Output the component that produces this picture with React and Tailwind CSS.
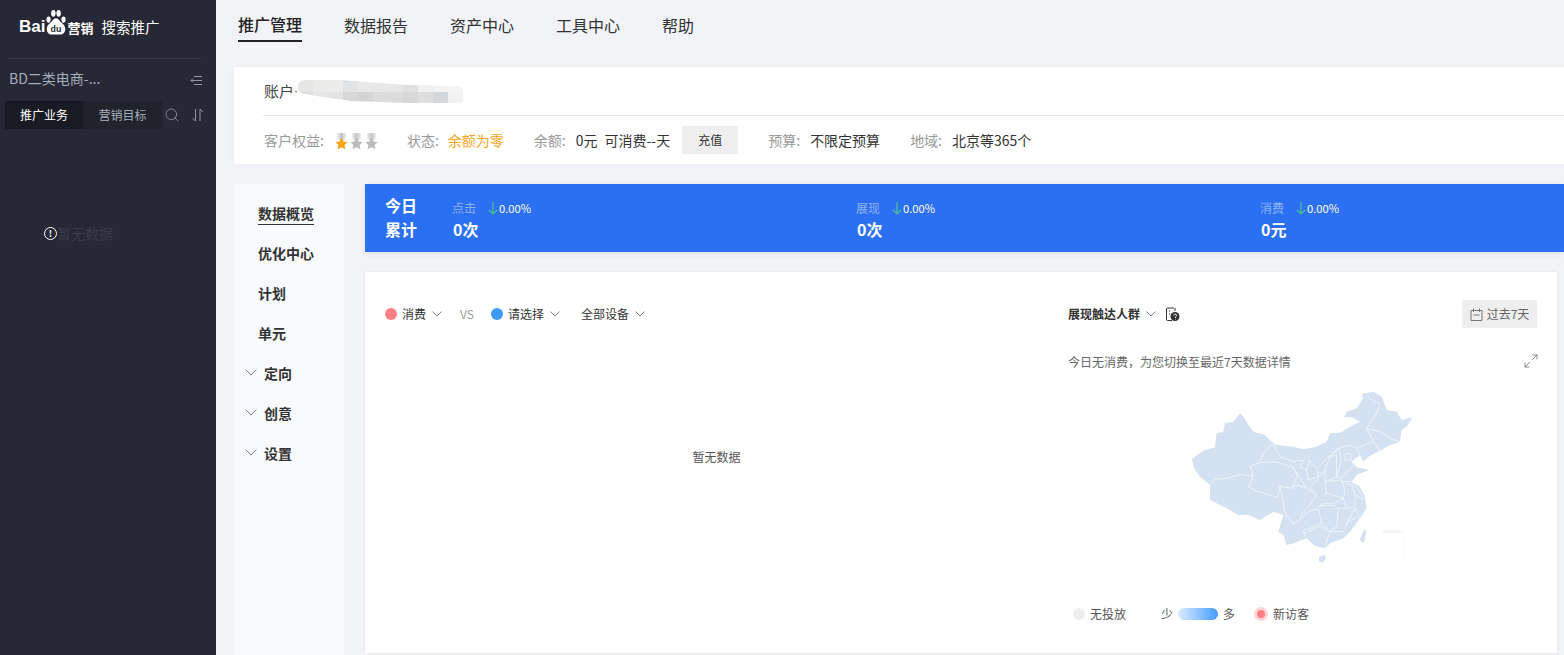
import React from 'react';
import { Search, Maximize2 } from 'lucide-react';

const FONT = 'font-["Noto_Sans_CJK_SC","Liberation_Sans",sans-serif]';

const Chevron = ({ w = 10, color = '#7b8794', className = '', stroke = 1 }) => (
  <svg width={w} height={w * 0.6} viewBox="0 0 10 6" className={`shrink-0 ${className}`}>
    <path d="M0.5 0.5L5 5L9.500 0.5" fill="none" stroke={color} strokeWidth={stroke} />
  </svg>
);

const BaiduPaw = () => (
  <svg width="22" height="26" viewBox="0 0 25 27" preserveAspectRatio="none" className="shrink-0 -mt-[10px]">
    <ellipse cx="4" cy="11" rx="2.400" ry="3.200" fill="#fff" />
    <ellipse cx="9.500" cy="4.500" rx="2.500" ry="3.500" fill="#fff" />
    <ellipse cx="15.500" cy="4.500" rx="2.500" ry="3.500" fill="#fff" />
    <ellipse cx="21" cy="11" rx="2.400" ry="3.200" fill="#fff" />
    <path d="M12.500 9.500c3 0 4 3 6 4.500 3 2 4.500 4 4.500 7 0 3-2.500 5.500-5.500 5.500H7.500C4.500 26.500 2 24 2 21c0-3 1.500-5 4.500-7 2-1.500 3-4.500 6-4.500z" fill="#fff" />
    <text x="12.500" y="24" textAnchor="middle" fontSize="10" fontWeight="700" fill="#262835" fontFamily="Liberation Sans">du</text>
  </svg>
);

const Medal = ({ color }) => (
  <svg width="15" height="18" viewBox="0 0 15 18" className="shrink-0 mt-[4px]">
    <path d="M3.500 0h8v6l-2 2h-4l-2-2z" fill="#dedede" />
    <path d="M6 0h3v8H6z" fill="#c8c8c8" />
    <path d="M7.500 4.500l1.900 3.900 4.300.6-3.100 3 .8 4.300-3.900-2.100-3.900 2.100.8-4.300-3.100-3 4.300-.6z" fill={color} />
  </svg>
);

const Mosaic = () => {
  const top = ['#e6e6e4', '#ebebea', '#ececeb', '#e2e3e4', '#e9e9e8', '#e8e8e8', '#e6e6e6', '#e0e0e0', '#f0f0f0', '#f3f3f3', '#f5f5f5'];
  const bottom = ['#dcdcda', '#e6e6e6', '#e3e3e3', '#d8d8d8', '#d4d5d5', '#dcdcdc', '#dcdcdc', '#d8d8d8', '#dedede', '#d5d8da', '#f1f1f1'];
  return (
    <svg width="168" height="26" viewBox="0 0 168 26" className="shrink-0 mt-[3px]">
      <defs>
        <clipPath id="smudge">
          <path d="M8 0h35l25 2 40 3 50 1c7 0 10 4 10 8 0 6-3 9-10 9l-50 0-55-2-35-5L8 14C3 14 0 11 0 7S3 0 8 0z" />
        </clipPath>
      </defs>
      <g clipPath="url(#smudge)">
        {top.map((c, i) => <rect key={i} x={i * 15} y="0" width="15" height="12" fill={c} />)}
        {bottom.map((c, i) => <rect key={i} x={i * 15} y="12" width="15" height="14" fill={c} />)}
      </g>
    </svg>
  );
};

const ChinaMap = () => (
  <svg width="270" height="190" viewBox="0 0 810 570" className="shrink-0 ml-[92px] mt-[8px]">
    <path
      fill="#d3e1f1"
      d="M95 238L130 212L165 202L170 160L190 155L195 130L220 125L240 100L250 110L262 130L280 155L315 165L335 185L350 195L400 200L430 208L470 200L500 185L510 160L540 158L590 130L600 125L575 112L553 112L560 95L590 85L610 55L605 42L640 35L665 50L680 90L710 95L725 120L757 112L745 135L725 150L720 185L690 195L660 212L625 230L610 245L600 225L575 245L590 262L627 270L590 285L575 305L600 320L615 350L620 385L600 415L570 455L550 475L510 490L495 505L465 498L440 475L400 490L380 495L370 465L355 455L370 405L340 395L300 420L265 405L235 405L200 385L150 360L150 315L120 290L105 270Z"
    />
    <path fill="#d3e1f1" d="M478 530L495 524L498 536L486 548L476 544Z" />
    <path fill="#d3e1f1" d="M612 450L619 452L614 482L606 490L600 478Z" />
    <g fill="none" stroke="#f4f7fb" strokeWidth="2.500" strokeLinejoin="round">
      <path d="M150 315L165 298L200 295L240 283L280 288L272 258L300 248L312 215L340 192L360 230L400 245L430 240L420 262L440 270L448 240L470 265L500 235L535 205L570 195L590 205L640 185L620 145L630 130L650 100L660 70L640 65L620 45" />
      <path d="M280 288L265 320L285 332L330 345L352 352L360 318L395 325L412 290L400 262L345 245L300 248" />
      <path d="M400 262L420 295L440 325L470 345L450 375L440 385L425 400L420 420L400 432L375 400L365 340L360 318" />
      <path d="M395 325L410 315L440 325M440 270L445 300L475 290L470 265" />
      <path d="M470 345L450 320L470 300L495 270L510 230L535 205M495 270L495 305L500 340L490 345" />
      <path d="M510 230L530 225L530 290L500 305M535 205L545 240L530 290L545 295L575 260L600 225L590 205" />
      <path d="M555 222L570 220L575 240L555 240Z" />
      <path d="M545 295L545 305L575 305M495 305L545 300L555 330L550 355L500 340" />
      <path d="M475 380L490 370L520 370L550 355L560 385L535 385L520 375L480 378" />
      <path d="M555 310L575 315L585 345L585 380L560 385M575 305L610 350M585 345L615 360M585 385L600 415" />
      <path d="M425 415L445 395L475 385L485 430L450 445L430 450L435 470" />
      <path d="M535 385L530 440M585 385L560 430L555 450M560 430L590 410" />
      <path d="M430 460L480 440L510 455L495 500M510 455L555 455M485 430L510 455M530 440L510 455" />
      <path d="M640 185L660 212M620 145L660 155L690 175L720 185" />
    </g>
    <rect x="666" y="452" width="64" height="95" fill="#ffffff" stroke="#f7f7f7" />
    <rect x="670" y="452" width="54" height="6" fill="#f0f0f0" />
  </svg>
);

const Stat = ({ label, unit }) => (
  <div className="w-[404px] shrink-0">
    <div className="flex items-center h-[20px]">
      <span className="text-[12px] text-[#8fb3f5] w-[36px]">{label}</span>
      <svg width="10" height="14" viewBox="0 0 10 14" className="mr-[1px]">
        <path d="M5 1v12M1 9l4 4 4-4" fill="none" stroke="#4fc08d" strokeWidth="1.200" />
      </svg>
      <span className="text-[11.2px] text-white">0.00%</span>
    </div>
    <div className="text-[16px] font-bold text-white leading-[22px] pl-[1px]">{unit}</div>
  </div>
);

const NavItem = ({ children, active }) => (
  <div className="h-[40px] flex items-center pl-[24px] text-[14px] font-bold text-[#333]">
    <span className={active ? 'border-b border-[#333] leading-[22px]' : ''}>{children}</span>
  </div>
);

const NavGroup = ({ children }) => (
  <div className="h-[40px] flex items-center pl-[11px] gap-[7px] text-[14px] font-bold text-[#333]">
    <Chevron w={12} color="#777" stroke={0.8} />
    {children}
  </div>
);

const Pick = ({ dot, children }) => (
  <div className="flex items-center text-[12px] text-[#333]">
    {dot && <span className={`w-[12px] h-[12px] rounded-full mr-[5px] ${dot}`} />}
    {children}
    <Chevron className="ml-[6px]" />
  </div>
);

const Label = ({ children, className }) => (
  <span className={`text-[#999] ${className}`}>{children}</span>
);

export default function App() {
  return (
    <div className={`flex w-[1564px] h-[655px] overflow-hidden bg-[#f1f3f7] ${FONT}`}>
      {/* Sidebar */}
      <aside className="w-[216px] shrink-0 bg-[#262835] flex flex-col">
        <div className="mx-[9px] w-[192px] h-[59px] pb-[5px] border-b border-[#383a47] flex items-center pl-[10px]">
          <span className="text-white font-bold text-[17px] font-['Liberation_Sans']">Bai</span>
          <BaiduPaw />
          <span className="text-white font-bold text-[13px] mt-[2px]">营销</span>
          <span className="text-white text-[14.5px] ml-[8px]">搜索推广</span>
        </div>
        <div className="mx-[9px] w-[194px] flex items-center justify-between h-[38px]">
          <span className="text-[14px] text-[#a6adbb]">BD二类电商-...</span>
          <svg width="13" height="11" viewBox="0 0 13 11" className="mt-[5px]" stroke="#9096a3" fill="none">
            <path d="M4 1.500h8M1 5.500h11M4 9.500h8M3 3.500l-2 2 2 2" />
          </svg>
        </div>
        <div className="flex items-center ml-[5px] mt-[4px]">
          <div className="w-[78px] h-[28px] bg-[#191b24] flex items-center justify-center text-[12px] text-white">推广业务</div>
          <div className="w-[79px] h-[28px] bg-[#20222c] flex items-center justify-center text-[12px] text-[#a6adbb]">营销目标</div>
          <Search size={16} strokeWidth={1.300} className="ml-[2px] text-[#9096a3]" />
          <svg width="14" height="14" viewBox="0 0 14 14" className="ml-[11px]" stroke="#9096a3" fill="none">
            <path d="M4.500 1v12L1.500 10M9 13V1l3 3" />
          </svg>
        </div>
        <div className="flex items-center ml-[44px] mt-[94px]">
          <span className="w-[13px] h-[13px] rounded-full border-[1.5px] border-white flex items-center justify-center text-[9px] leading-none font-bold text-white">!</span>
          <span className="text-[14px] text-[#3a3c48]">暂无数据</span>
        </div>
      </aside>

      <main className="flex-1 min-w-0 flex flex-col">
        {/* Top nav */}
        <nav className="h-[67px] shrink-0 flex items-start pl-[22px] gap-[42px] text-[16px] text-[#333]">
          <div className="h-[42px] pt-[8px] flex items-center border-b-2 border-[#222] text-[#222] font-medium">推广管理</div>
          <div className="h-[42px] pt-[8px] flex items-center">数据报告</div>
          <div className="h-[42px] pt-[8px] flex items-center">资产中心</div>
          <div className="h-[42px] pt-[8px] flex items-center">工具中心</div>
          <div className="h-[42px] pt-[8px] flex items-center">帮助</div>
        </nav>

        {/* Account */}
        <section className="ml-[18px] h-[97px] shrink-0 bg-white shadow-[0_0_8px_rgba(0,0,0,0.04)]">
          <div className="ml-[29px] h-[49px] border-b border-[#e8e8e8] flex items-center pl-[1px]">
            <span className="text-[15px] text-[#444]">账户</span>
            <span className="text-[12px] text-[#444] w-[4px] font-['Liberation_Sans']">·</span>
            <Mosaic />
          </div>
          <div className="h-[48px] flex items-center pl-[30px] text-[14px]">
            <Label className="mr-[10px]">客户权益:</Label>
            <Medal color="#f9a51a" />
            <Medal color="#bcbcbc" />
            <Medal color="#bcbcbc" />
            <Label className="ml-[28px] mr-[9px]">状态:</Label>
            <span className="text-[#f9a51a]">余额为零</span>
            <Label className="ml-[30px] mr-[10px]">余额:</Label>
            <span className="text-[#333]">0元</span>
            <span className="text-[#333] ml-[7px]">可消费--天</span>
            <button className="ml-[12px] w-[56px] h-[28px] bg-[#eeeeee] text-[12px] text-[#333]">充值</button>
            <Label className="ml-[30px] mr-[10px]">预算:</Label>
            <span className="text-[#333]">不限定预算</span>
            <Label className="ml-[30px] mr-[10px]">地域:</Label>
            <span className="text-[#333]">北京等365个</span>
          </div>
        </section>

        <div className="flex flex-1 min-h-0 ml-[18px] mt-[20px]">
          {/* Left nav */}
          <div className="w-[110px] shrink-0 bg-[#f9fafc] pt-[9px]">
            <NavItem active>数据概览</NavItem>
            <NavItem>优化中心</NavItem>
            <NavItem>计划</NavItem>
            <NavItem>单元</NavItem>
            <NavGroup>定向</NavGroup>
            <NavGroup>创意</NavGroup>
            <NavGroup>设置</NavGroup>
          </div>

          <div className="flex-1 min-w-0 ml-[21px] flex flex-col">
            {/* Today bar */}
            <div className="h-[68px] shrink-0 bg-[#2b70f2] flex items-start pl-[20px] pt-[9px] shadow-[0_2px_6px_rgba(0,0,0,0.08)]">
              <div className="w-[67px] shrink-0 text-[16px] font-bold text-white leading-[24px]">
                <div>今日</div>
                <div>累计</div>
              </div>
              <div className="flex pt-[5px]">
                <Stat label="点击" unit="0次" />
                <Stat label="展现" unit="0次" />
                <Stat label="消费" unit="0元" />
              </div>
            </div>

            {/* Chart card */}
            <div className="mt-[20px] mr-[7px] h-[381px] shrink-0 bg-white shadow-[0_0_3px_rgba(0,0,0,0.08)] flex">
              <div className="w-[703px] shrink-0 flex flex-col">
                <div className="flex items-center pl-[20px] h-[28px] mt-[28px]">
                  <Pick dot="bg-[#ff7f85]">消费</Pick>
                  <span className="ml-[18px] text-[12px] text-[#999]">VS</span>
                  <div className="ml-[17px]"><Pick dot="bg-[#3d9bfc]">请选择</Pick></div>
                  <div className="ml-[21px]"><Pick>全部设备</Pick></div>
                </div>
                <div className="flex-1 flex justify-center pt-[120px] text-[12px] text-[#555]">暂无数据</div>
              </div>

              <div className="flex-1 min-w-0 flex flex-col">
                <div className="flex items-center justify-between h-[28px] mt-[28px] pr-[20px]">
                  <div className="flex items-center">
                    <span className="text-[12px] font-bold text-[#333]">展现触达人群</span>
                    <Chevron className="ml-[6px]" color="#6b7fa0" />
                    <svg width="15" height="15" viewBox="0 0 15 15" className="ml-[9px]">
                      <path d="M9 1H2.500A1 1 0 0 0 1.500 2v10.500a1 1 0 0 0 1 1H7M10 1v3" fill="none" stroke="#333" strokeWidth="1" />
                      <path d="M4 4h1M4 7h1" stroke="#333" />
                      <circle cx="10" cy="9.500" r="4.500" fill="#333" />
                      <path d="M8.700 8.500a1.400 1.400 0 1 1 1.800 1.300V11M10.500 12v.5" stroke="#fff" fill="none" strokeWidth="0.900" />
                    </svg>
                  </div>
                  <div className="w-[75px] h-[28px] bg-[#eeeeee] flex items-center justify-center gap-[4px] text-[12px] text-[#666]">
                    <svg width="13" height="13" viewBox="0 0 13 13" fill="none" stroke="#777">
                      <path d="M1 2.500h11v10H1zM3.500 0.500v3.500M9.500 0.500v3.500M3.500 7h6" />
                    </svg>
                    过去7天
                  </div>
                </div>
                <div className="flex items-center justify-between mt-[24px] pr-[18px] h-[20px]">
                  <span className="text-[12px] text-[#666]">今日无消费，为您切换至最近7天数据详情</span>
                  <Maximize2 size={16} strokeWidth={1} className="text-[#555] -mt-[3px]" />
                </div>
                <ChinaMap />
                <div className="flex items-center h-[18px] text-[12px] text-[#555] mt-[35px] pl-[5px]">
                  <span className="w-[12px] h-[12px] rounded-full bg-[#eeeeee] mr-[5px]" />
                  <span>无投放</span>
                  <span className="ml-[35px]">少</span>
                  <span className="ml-[5px] w-[40px] h-[12px] rounded-full bg-gradient-to-r from-[#dcecfc] to-[#3d9bfc]" />
                  <span className="ml-[5px]">多</span>
                  <span className="ml-[19px] w-[14px] h-[14px] rounded-full bg-[#ffd5d7] flex items-center justify-center mr-[5px]">
                    <span className="w-[8px] h-[8px] rounded-full bg-[#ff7f85]" />
                  </span>
                  <span>新访客</span>
                </div>
              </div>
            </div>
          </div>
        </div>
      </main>
    </div>
  );
}
